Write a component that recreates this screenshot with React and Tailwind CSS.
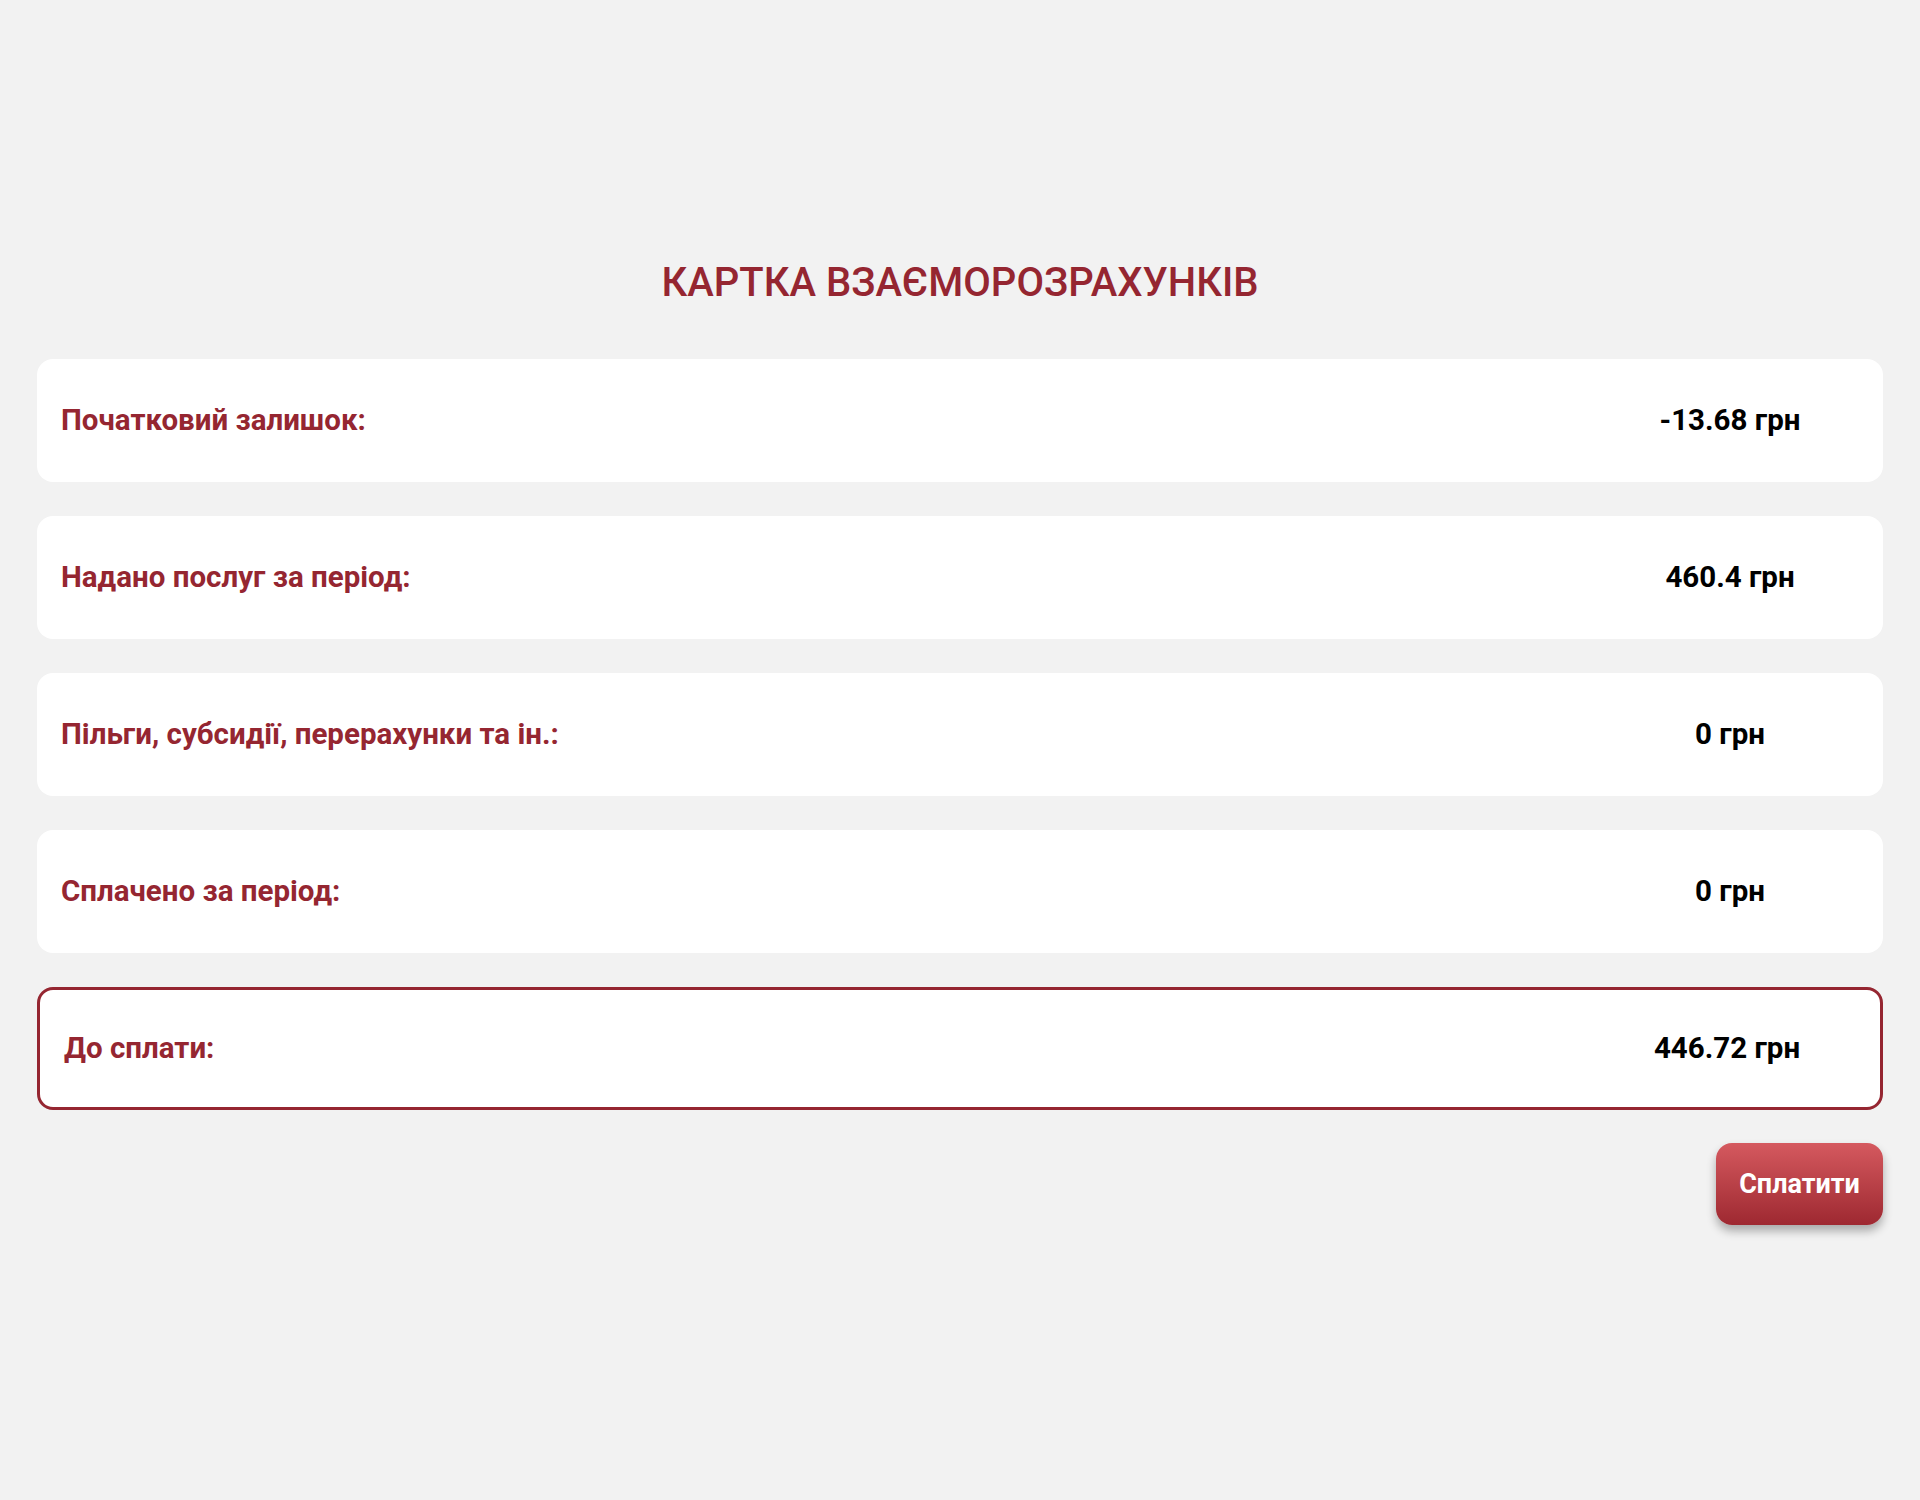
const rows = [
  { label: 'Початковий залишок:', value: '-13.68 грн' },
  { label: 'Надано послуг за період:', value: '460.4 грн' },
  { label: 'Пільги, субсидії, перерахунки та ін.:', value: '0 грн' },
  { label: 'Сплачено за період:', value: '0 грн' },
];

const Row = ({ label, value, total }) => (
  <div
    className={
      'flex h-[123px] items-center rounded-2xl bg-white pl-6 pr-6 ' +
      (total ? 'h-[122px] border-[3px] border-[#952631]' : '')
    }
  >
    <div className="flex-1 text-[29.5px] font-bold text-[#952631]">{label}</div>
    <div className="w-[258px] text-center text-[29.5px] font-bold text-black">{value}</div>
  </div>
);

const App = () => {
  return (
    <div
      className="min-h-screen bg-[#f2f2f2] px-[37px] pt-[259px]"
      style={{ fontFamily: 'Roboto, "Noto Sans", sans-serif' }}
    >
      <h1 className="mb-[52px] text-center text-[40px] font-medium leading-[48px] text-[#952631]">
        КАРТКА ВЗАЄМОРОЗРАХУНКІВ
      </h1>

      <div className="flex flex-col gap-[34px]">
        {rows.map((row) => (
          <Row key={row.label} label={row.label} value={row.value} />
        ))}
        <Row label="До сплати:" value="446.72 грн" total />
      </div>

      <div className="mt-[33px] flex justify-end">
        <button className="h-[82px] w-[167px] rounded-2xl bg-gradient-to-b from-[#d5595f] to-[#9e2831] text-[27px] font-bold text-white shadow-[0_6px_10px_rgba(0,0,0,0.3)]">
          Сплатити
        </button>
      </div>
    </div>
  );
};

export default App;
